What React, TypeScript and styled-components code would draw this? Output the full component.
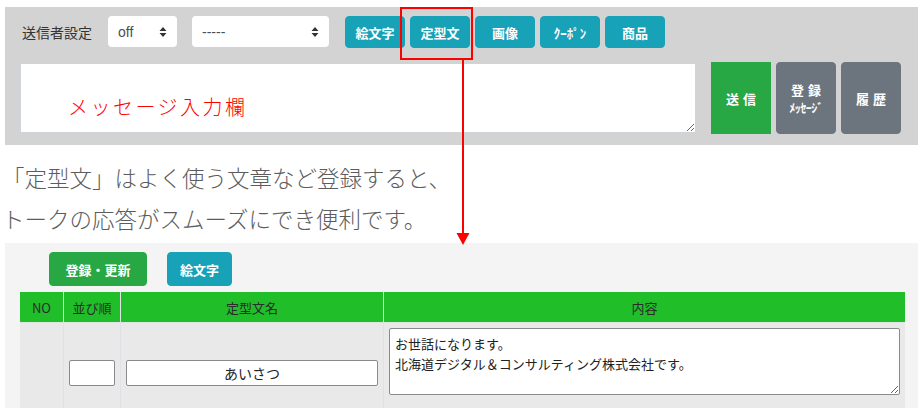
import React from "react";
import styled, { createGlobalStyle } from "styled-components";

const Global = createGlobalStyle`
  html, body { margin: 0; padding: 0; background: #ffffff; }
  body { font-family: "Noto Sans CJK JP", "Noto Sans", sans-serif; color: #333; }
  * { box-sizing: border-box; }
`;

const Page = styled.div`
  position: relative;
  width: 922px;
  height: 408px;
  overflow: hidden;
  padding-top: 7px;
`;

const TopPanel = styled.section`
  margin: 0 4px 0 5px;
  background: #d3d3d3;
  padding: 9px 17px 11px 15px;
`;

const ToolRow = styled.div`
  display: flex;
  align-items: center;
  height: 32px;
`;

const Label = styled.span`
  font-size: 14px;
  color: #333;
  padding-left: 2px;
  width: 88px;
`;

const SelectBox = styled.div<{ $w: number; $mr: number }>`
  width: ${(p) => p.$w}px;
  margin-right: ${(p) => p.$mr}px;
  height: 31px;
  margin-bottom: 1px;
  background: #fff;
  border-radius: 4px;
  display: flex;
  align-items: center;
  justify-content: space-between;
  padding: 0 10px 0 10px;
  font-family: "Liberation Sans", Arial, sans-serif;
  font-size: 14px;
  color: #495057;
`;

const ToolButtons = styled.div`
  display: flex;
  gap: 5px;
`;

const Btn = styled.button<{ $bg: string; $w?: number; $h?: number; $radius?: number }>`
  width: ${(p) => p.$w ?? 60}px;
  height: ${(p) => p.$h ?? 32}px;
  background: ${(p) => p.$bg};
  border: 1px solid ${(p) => p.$bg};
  border-radius: ${(p) => p.$radius ?? 4}px;
  color: #fff;
  font-family: "Noto Sans CJK JP", sans-serif;
  font-weight: 700;
  font-size: 13px;
  padding: 0;
  display: flex;
  flex-direction: column;
  align-items: center;
  justify-content: center;
  gap: 6px;
  line-height: 1;
`;

const SmallLine = styled.span`
  font-size: 12px;
  letter-spacing: -0.5px;
  line-height: 1;
`;

const SpacedLine = styled.span`
  letter-spacing: 4px;
  margin-right: -4px;
  line-height: 1;
`;

const MessageRow = styled.div`
  display: flex;
  margin-top: 14px;
  height: 72px;
`;

const MessageBox = styled.div`
  position: relative;
  width: 676px;
  height: 70px;
  margin-top: 1px;
  margin-right: 15px;
`;

const MessageArea = styled.textarea`
  width: 100%;
  height: 100%;
  border: 1px solid #ced4da;
  background: #fff;
  resize: vertical;
  display: block;
`;

const Annotation = styled.span`
  position: absolute;
  left: 48px;
  top: 34px;
  color: #ff0000;
  font-size: 20px;
  font-weight: 300;
  letter-spacing: 2.5px;
  line-height: 1;
  pointer-events: none;
`;

const SendButtons = styled.div`
  display: flex;
  gap: 5px;
`;

const Description = styled.p`
  margin: 0;
  padding: 12px 0 4px 2px;
  font-size: 22.5px;
  line-height: 41px;
  color: #5c5c5c;
  font-weight: 300;
`;

const BottomPanel = styled.section`
  margin: 0 4px 0 5px;
  background: #f4f4f4;
  padding: 9px 13px 0 15px;
  height: 170px;
`;

const ActionRow = styled.div`
  display: flex;
  gap: 20px;
  margin-left: 29px;
`;

const Table = styled.div`
  margin-top: 6px;
  display: grid;
  grid-template-columns: 43px 57px 263px 522px;
`;

const HeadCell = styled.div`
  height: 30px;
  background: #20bf2a;
  border-left: 1px solid #dfe6e0;
  display: flex;
  align-items: center;
  justify-content: center;
  font-size: 13px;
  color: #2b2b2b;
  &:first-child { border-left: none; }
`;

const Cell = styled.div<{ $first?: boolean }>`
  height: 86px;
  background: #e9e9e9;
  border-left: ${(p) => (p.$first ? "none" : "1px solid #dee2e6")};
  border-top: 1px solid #dee2e6;
  display: flex;
  align-items: center;
  padding: 0 5px;
`;

const TopCell = styled(Cell)`
  align-items: flex-start;
  padding-top: 5px;
`;

const TextInput = styled.input<{ $w: number }>`
  width: ${(p) => p.$w}px;
  height: 26px;
  border: 1px solid #8a8a8a;
  border-radius: 2px;
  background: #fff;
  text-align: center;
  font-family: "Noto Sans CJK JP", sans-serif;
  font-size: 14px;
  font-weight: 400;
  color: #222;
  padding: 0;
  margin-top: 14px;
`;

const ContentArea = styled.textarea`
  width: 513px;
  height: 67px;
  border: 1px solid #8a8a8a;
  border-radius: 2px;
  background: #fff;
  font-family: "Noto Sans CJK JP", sans-serif;
  font-size: 13px;
  line-height: 20px;
  color: #222;
  padding: 5px 5px;
  resize: vertical;
  display: block;
`;

const Overlay = styled.svg`
  position: absolute;
  left: 0;
  top: 0;
  pointer-events: none;
`;

const Highlight = styled.div`
  position: absolute;
  left: 400px;
  top: 7px;
  width: 73px;
  height: 53px;
  border: 2px solid #ff0000;
  pointer-events: none;
`;

const Carets = () => (
  <svg width="8" height="12" viewBox="0 0 8 12">
    <path d="M4 1 L7.5 5 H0.5 Z" fill="#333" />
    <path d="M4 11 L7.5 7 H0.5 Z" fill="#333" />
  </svg>
);

export default function App() {
  return (
    <Page>
      <Global />
      <TopPanel>
        <ToolRow>
          <Label>送信者設定</Label>
          <SelectBox $w={69} $mr={15}>
            <span>off</span>
            <Carets />
          </SelectBox>
          <SelectBox $w={137} $mr={16}>
            <span>-----</span>
            <Carets />
          </SelectBox>
          <ToolButtons>
            <Btn $bg="#17a2b8">絵文字</Btn>
            <Btn $bg="#17a2b8">定型文</Btn>
            <Btn $bg="#17a2b8">画像</Btn>
            <Btn $bg="#17a2b8">ｸｰﾎﾟﾝ</Btn>
            <Btn $bg="#17a2b8">商品</Btn>
          </ToolButtons>
        </ToolRow>
        <MessageRow>
          <MessageBox>
            <MessageArea />
            <Annotation>メッセージ入力欄</Annotation>
          </MessageBox>
          <SendButtons>
            <Btn $bg="#28a745" $h={72} $radius={0}>
              <SpacedLine>送信</SpacedLine>
            </Btn>
            <Btn $bg="#6c757d" $h={72}>
              <SpacedLine>登録</SpacedLine>
              <SmallLine>ﾒｯｾｰｼﾞ</SmallLine>
            </Btn>
            <Btn $bg="#6c757d" $h={72}>
              <SpacedLine>履歴</SpacedLine>
            </Btn>
          </SendButtons>
        </MessageRow>
      </TopPanel>
      <Description>
        「定型文」はよく使う文章など登録すると、
        <br />
        トークの応答がスムーズにでき便利です。
      </Description>
      <BottomPanel>
        <ActionRow>
          <Btn $bg="#28a745" $w={98} $h={34}>登録・更新</Btn>
          <Btn $bg="#17a2b8" $w={65} $h={34}>絵文字</Btn>
        </ActionRow>
        <Table>
          <HeadCell>NO</HeadCell>
          <HeadCell>並び順</HeadCell>
          <HeadCell>定型文名</HeadCell>
          <HeadCell>内容</HeadCell>
          <Cell $first />
          <Cell>
            <TextInput $w={46} defaultValue="" />
          </Cell>
          <Cell>
            <TextInput $w={252} defaultValue="あいさつ" />
          </Cell>
          <TopCell>
            <ContentArea
              defaultValue={"お世話になります。\n北海道デジタル＆コンサルティング株式会社です。"}
            />
          </TopCell>
        </Table>
      </BottomPanel>
      <Highlight />
      <Overlay width="922" height="408">
        <line x1="463" y1="60" x2="463" y2="234" stroke="#ff0000" strokeWidth="2" />
        <path d="M456.5 233 L469.5 233 L463 245 Z" fill="#ff0000" />
      </Overlay>
    </Page>
  );
}
